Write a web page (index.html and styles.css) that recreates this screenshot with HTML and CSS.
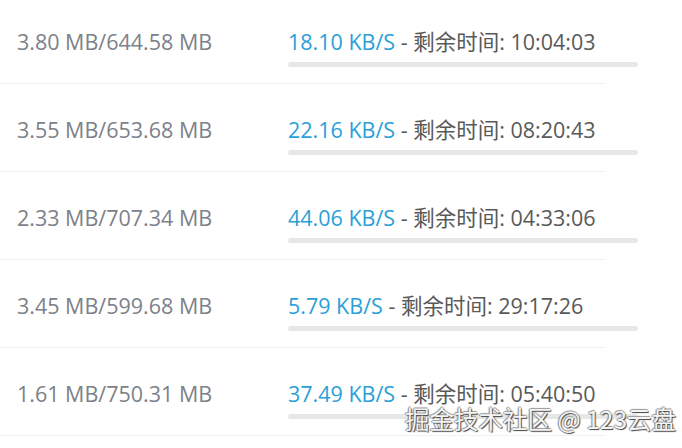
FILE: index.html
```html
<!DOCTYPE html>
<html lang="zh">
<head>
<meta charset="utf-8">
<link rel="stylesheet" href="styles.css">
</head>
<body>
<div class="list">
  <div class="row">
    <div class="size">3.80 MB/644.58 MB</div>
    <div class="progress">
      <div class="info"><span class="speed">18.10 KB/S</span> - 剩余时间: 10:04:03</div>
      <div class="bar"></div>
    </div>
  </div>
  <div class="row">
    <div class="size">3.55 MB/653.68 MB</div>
    <div class="progress">
      <div class="info"><span class="speed">22.16 KB/S</span> - 剩余时间: 08:20:43</div>
      <div class="bar"></div>
    </div>
  </div>
  <div class="row">
    <div class="size">2.33 MB/707.34 MB</div>
    <div class="progress">
      <div class="info"><span class="speed">44.06 KB/S</span> - 剩余时间: 04:33:06</div>
      <div class="bar"></div>
    </div>
  </div>
  <div class="row">
    <div class="size">3.45 MB/599.68 MB</div>
    <div class="progress">
      <div class="info"><span class="speed">5.79 KB/S</span> - 剩余时间: 29:17:26</div>
      <div class="bar"></div>
    </div>
  </div>
  <div class="row">
    <div class="size">1.61 MB/750.31 MB</div>
    <div class="progress">
      <div class="info"><span class="speed">37.49 KB/S</span> - 剩余时间: 05:40:50</div>
      <div class="bar"></div>
    </div>
  </div>
</div>
<div class="watermark">掘金技术社区 @ 123云盘</div>
</body>
</html>
```

FILE: styles.css
```css
html, body {
  margin: 0;
  padding: 0;
  background: #ffffff;
  width: 682px;
  height: 448px;
  overflow: hidden;
}
body {
  position: relative;
  font-family: "Open Sans", "Noto Sans CJK SC", sans-serif;
}
.list {
  margin-top: -4px;
}
.row {
  display: flex;
  width: 605px;
  height: 87px;
  border-bottom: 1px solid #f1f1f1;
}
.size {
  width: 271px;
  padding-left: 17px;
  padding-top: 32px;
  font-size: 21.5px;
  line-height: 28px;
  color: #7d8189;
  box-sizing: content-box;
  flex: none;
}
.progress {
  width: 350px;
  flex: none;
  padding-top: 32px;
}
.info {
  font-size: 21.5px;
  line-height: 28px;
  color: #595959;
  white-space: nowrap;
}
.speed {
  color: #2a9fd8;
}
.bar {
  margin-top: 6px;
  height: 5px;
  border-radius: 3px;
  background: #e7e7e7;
}
.watermark {
  position: absolute;
  right: 6px;
  bottom: 14px;
  font-family: "Noto Sans CJK SC", sans-serif;
  font-size: 24.5px;
  line-height: 30px;
  color: #f4f4f4;
  text-shadow: 1px 1px 1px #444, -1px 0 1px #888, 0 -1px 1px #999;
}
```
